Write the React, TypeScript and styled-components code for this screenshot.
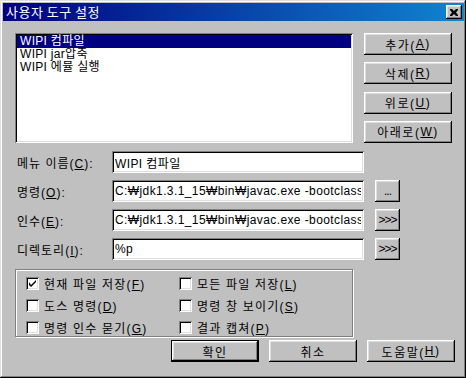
import React from 'react';
import styled, { createGlobalStyle } from 'styled-components';

const GlobalStyle = createGlobalStyle`
  html, body {
    margin: 0;
    padding: 0;
    background: #c0c0c0;
  }
  * {
    box-sizing: border-box;
  }
`;

const items = ['WIPI 컴파일', 'WIPI jar압축', 'WIPI 에뮬 실행'];

const sideButtons = [
  { label: '추가', key: 'A' },
  { label: '삭제', key: 'R' },
  { label: '위로', key: 'U' },
  { label: '아래로', key: 'W' },
];

const cmd = 'C:₩jdk1.3.1_15₩bin₩javac.exe -bootclasspath ₩WIPI₩lib₩classes.zip';

const fields = [
  { label: '메뉴 이름', key: 'C', value: 'WIPI 컴파일', extra: '' },
  { label: '명령', key: 'O', value: cmd, extra: '...' },
  { label: '인수', key: 'E', value: cmd, extra: '>>>' },
  { label: '디렉토리', key: 'I', value: '%p', extra: '>>>' },
];

const checks = [
  { label: '현재 파일 저장', key: 'F', checked: true },
  { label: '모든 파일 저장', key: 'L', checked: false },
  { label: '도스 명령', key: 'D', checked: false },
  { label: '명령 창 보이기', key: 'S', checked: false },
  { label: '명령 인수 묻기', key: 'G', checked: false },
  { label: '결과 캡쳐', key: 'P', checked: false },
];

const Mnemonic = ({ label, k }: { label: string; k: string }) => (
  <>
    {label}(<u>{k}</u>)
  </>
);

const App = () => {
  return (
    <>
      <GlobalStyle />
      <Window>
        <TitleBar>
          <Title>사용자 도구 설정</Title>
          <CloseButton>
            <svg width="8" height="7" viewBox="0 0 8 7">
              <path
                d="M0 0h2l2 2 2-2h2v1l-2 2.5 2 2.5v1h-2l-2-2-2 2h-2v-1l2-2.5-2-2.5z"
                fill="#000"
              />
            </svg>
          </CloseButton>
        </TitleBar>
        <Body>
          <TopSection>
            <ListBox>
              {items.map((item, i) => (
                <ListItem key={item} selected={i === 0}>
                  {item}
                </ListItem>
              ))}
            </ListBox>
            <SideColumn>
              {sideButtons.map((b) => (
                <Button key={b.key}>
                  <Mnemonic label={b.label} k={b.key} />
                </Button>
              ))}
            </SideColumn>
          </TopSection>

          <Fields>
            {fields.map((f) => (
              <FieldRow key={f.key}>
                <Label>
                  <Mnemonic label={f.label} k={f.key} />:
                </Label>
                <TextBox readOnly value={f.value} />
                {f.extra ? <SmallButton>{f.extra}</SmallButton> : <span />}
              </FieldRow>
            ))}
          </Fields>

          <GroupBox>
            {checks.map((c) => (
              <CheckRow key={c.key}>
                <CheckBox>
                  {c.checked && (
                    <svg width="7" height="7" viewBox="0 0 7 7">
                      <path d="M0 2v3l2 2 5-5v-2l-5 5z" fill="#000" />
                    </svg>
                  )}
                </CheckBox>
                <span>
                  <Mnemonic label={c.label} k={c.key} />
                </span>
              </CheckRow>
            ))}
          </GroupBox>

          <BottomRow>
            <Button isDefault>확인</Button>
            <Button>취소</Button>
            <Button>
              <Mnemonic label="도움말" k="H" />
            </Button>
          </BottomRow>
        </Body>
      </Window>
    </>
  );
};

export default App;

const Window = styled.div`
  width: 466px;
  height: 378px;
  padding: 3px 2px 3px 3px;
  background: #c0c0c0;
  box-shadow: inset -1px -1px #000, inset 1px 1px #dfdfdf,
    inset -2px -2px #808080, inset 2px 2px #fff;
  font-family: 'Liberation Sans', 'Noto Sans CJK KR', sans-serif;
  font-size: 12px;
  color: #000;
  display: flex;
  flex-direction: column;
`;

const TitleBar = styled.div`
  height: 18px;
  background: linear-gradient(to right, #000080, #1084d0);
  display: flex;
  align-items: center;
  justify-content: space-between;
  padding: 0 2px 0 3px;
`;

const Title = styled.span`
  color: #fff;
  font-size: 13px;
  letter-spacing: 0.5px;
  font-family: 'Noto Sans CJK KR', sans-serif;
  line-height: 18px;
`;

const CloseButton = styled.div`
  width: 16px;
  height: 14px;
  background: #c0c0c0;
  display: flex;
  align-items: center;
  justify-content: center;
  box-shadow: inset -1px -1px #000, inset 1px 1px #fff,
    inset -2px -2px #808080, inset 2px 2px #dfdfdf;
`;

const Body = styled.div`
  display: flex;
  flex-direction: column;
  padding: 12px 9px 0 12px;
`;

const TopSection = styled.div`
  display: flex;
  gap: 11px;
`;

const ListBox = styled.div`
  width: 338px;
  height: 110px;
  background: #fff;
  padding: 2px;
  box-shadow: inset 1px 1px #808080, inset -1px -1px #fff,
    inset 2px 2px #000, inset -2px -2px #dfdfdf;
`;

const ListItem = styled.div<{ selected?: boolean }>`
  height: 13px;
  line-height: 13px;
  padding-left: 3px;
  white-space: nowrap;
  letter-spacing: 0.3px;
  background: ${(p) => (p.selected ? '#000080' : 'transparent')};
  color: ${(p) => (p.selected ? '#fff' : '#000')};
`;

const SideColumn = styled.div`
  width: 88px;
  height: 110px;
  display: flex;
  flex-direction: column;
  justify-content: space-between;
`;

const Button = styled.div<{ isDefault?: boolean }>`
  width: 88px;
  height: 22px;
  display: flex;
  align-items: center;
  justify-content: center;
  background: #c0c0c0;
  letter-spacing: 1.5px;
  white-space: nowrap;
  box-shadow: ${(p) =>
    p.isDefault
      ? 'inset -1px -1px #000, inset 1px 1px #000, inset -2px -2px #000, inset 2px 2px #fff, inset -3px -3px #808080, inset 3px 3px #dfdfdf'
      : 'inset -1px -1px #000, inset 1px 1px #fff, inset -2px -2px #808080, inset 2px 2px #dfdfdf'};
`;

const Fields = styled.div`
  display: flex;
  flex-direction: column;
  gap: 7px;
  margin-top: 8px;
`;

const FieldRow = styled.div`
  display: grid;
  grid-template-columns: 86px 252px 25px;
  column-gap: 11px;
  align-items: center;
  height: 22px;
`;

const Label = styled.span`
  padding-left: 2px;
  letter-spacing: 1px;
  white-space: nowrap;
`;

const TextBox = styled.input`
  width: 252px;
  height: 22px;
  border: none;
  outline: none;
  margin: 0;
  padding: 0 3px;
  background: #fff;
  font-family: 'Liberation Sans', 'Noto Sans CJK KR', sans-serif;
  font-size: 12px;
  letter-spacing: 0.4px;
  color: #000;
  box-shadow: inset 1px 1px #808080, inset -1px -1px #fff,
    inset 2px 2px #000, inset -2px -2px #dfdfdf;
`;

const SmallButton = styled.div`
  width: 25px;
  height: 22px;
  display: flex;
  align-items: center;
  justify-content: center;
  background: #c0c0c0;
  font-size: 12px;
  letter-spacing: -1px;
  box-shadow: inset -1px -1px #000, inset 1px 1px #fff,
    inset -2px -2px #808080, inset 2px 2px #dfdfdf;
`;

const GroupBox = styled.div`
  width: 338px;
  margin-top: 9px;
  padding: 7px 10px 2px 10px;
  border: 1px solid #808080;
  box-shadow: inset 1px 1px #fff, 1px 1px #fff;
  display: grid;
  grid-template-columns: 153px 1fr;
  grid-auto-rows: 13px;
  row-gap: 9px;
`;

const CheckRow = styled.div`
  display: flex;
  align-items: center;
  gap: 5px;
  letter-spacing: 1.2px;
  white-space: nowrap;
  height: 13px;
`;

const CheckBox = styled.div`
  width: 13px;
  height: 13px;
  flex: none;
  background: #fff;
  display: flex;
  align-items: center;
  justify-content: center;
  box-shadow: inset 1px 1px #808080, inset -1px -1px #fff,
    inset 2px 2px #000, inset -2px -2px #dfdfdf;
`;

const BottomRow = styled.div`
  display: flex;
  justify-content: flex-end;
  gap: 10px;
  margin-top: 3px;
`;
